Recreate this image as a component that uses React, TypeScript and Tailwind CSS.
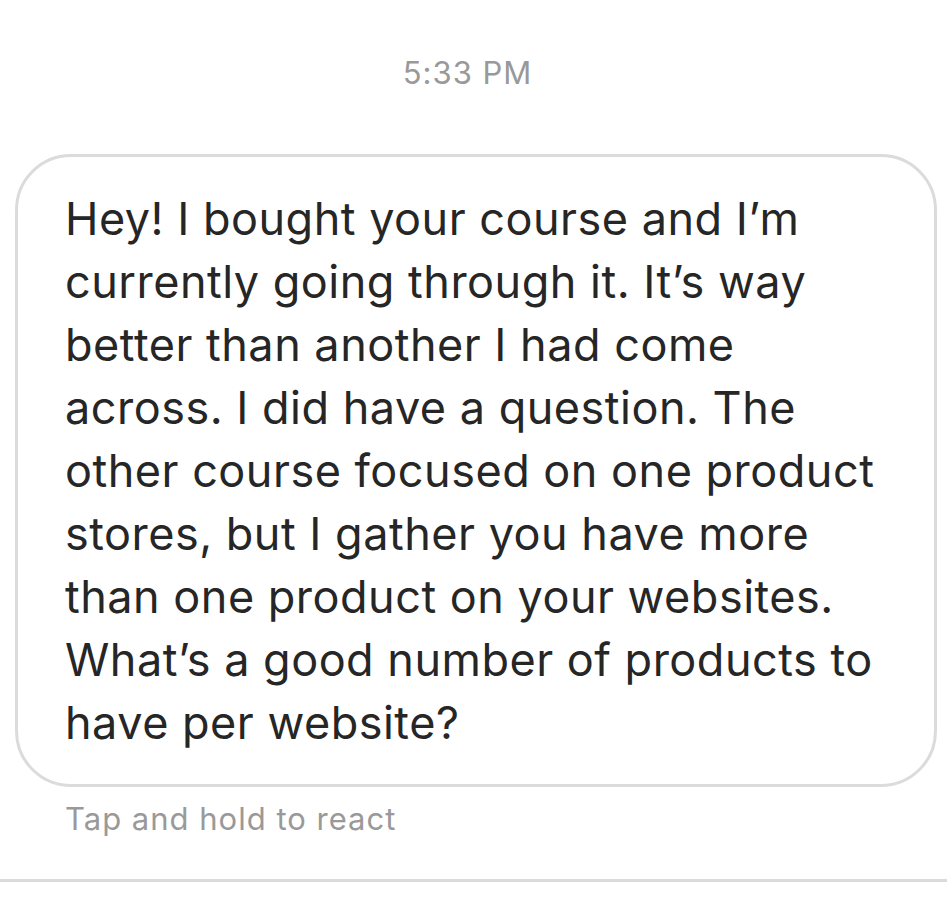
import React from "react";

const lines = [
  "Hey! I bought your course and I\u2019m",
  "currently going through it. It\u2019s way",
  "better than another I had come",
  "across. I did have a question. The",
  "other course focused on one product",
  "stores, but I gather you have more",
  "than one product on your websites.",
  "What\u2019s a good number of products to",
  "have per website?",
];

export default function App() {
  return (
    <div
      className="w-[947px] h-[900px] bg-white overflow-hidden"
      style={{ fontFamily: "Inter, 'Liberation Sans', Arial, sans-serif" }}
    >
      <div className="h-[154px] pt-[54px] pr-[12px] flex justify-center">
        <div className="text-[31px] leading-[38px] tracking-[1px] text-[#999999]">5:33 PM</div>
      </div>
      <div className="ml-[15px] w-[922px] h-[633px] border-[3px] border-[#dbdbdb] rounded-[56px] pl-[47px] pt-[30px]">
        {lines.map((l, i) => (
          <div key={i} className="text-[45px] leading-[63px] tracking-[0.5px] text-[#262626] whitespace-nowrap">
            {l}
          </div>
        ))}
      </div>
      <div className="pl-[65px] pt-[13px] h-[92px]">
        <div className="text-[31px] leading-[38px] tracking-[1px] text-[#999999]">Tap and hold to react</div>
      </div>
      <div className="h-[3px] bg-[#dbdbdb]" />
    </div>
  );
}
